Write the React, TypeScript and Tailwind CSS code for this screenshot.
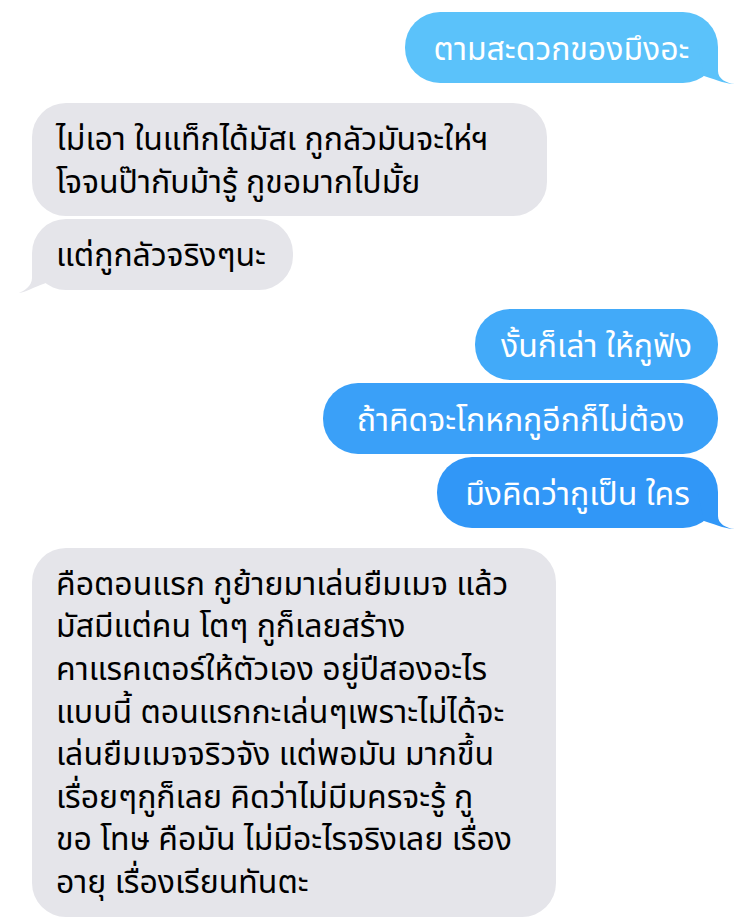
import React from "react";

const FONT = { fontFamily: '"Noto Sans", "Noto Sans Thai", "Noto Sans CJK SC", sans-serif' };

function TailRight({ color }: { color: string }) {
  return (
    <svg
      className="absolute right-[-20px] bottom-[-4px] w-[40px] h-[40px] overflow-visible"
      viewBox="-20 -36 40 40"
    >
      <path d="M0 -35 L0 -12 C0 -4 8 0 17 1 C9 1 1 -2 -14 -7 L-20 -35 Z" fill={color} />
    </svg>
  );
}

function TailLeft({ color }: { color: string }) {
  return (
    <svg
      className="absolute left-[-20px] bottom-[-4px] w-[40px] h-[40px] overflow-visible"
      viewBox="-20 -36 40 40"
    >
      <path
        d="M0 -35 L0 -12 C0 -4 -8 1 -13 3 C-6 2 0 -2 14 -7 L20 -35 Z"
        fill={color}
      />
    </svg>
  );
}

function Out({ text, color, tail, w }: { text: string; color: string; tail?: boolean; w: string }) {
  return (
    <div className="flex justify-end">
      <div
        className={`relative rounded-[35px] px-[20px] py-[14px] text-white text-[32px] leading-[43px] whitespace-nowrap text-center ${w}`}
        style={{ backgroundColor: color }}
      >
        {text}
        {tail && <TailRight color={color} />}
      </div>
    </div>
  );
}

function In({ lines, tail, w }: { lines: string[]; tail?: boolean; w: string }) {
  return (
    <div className="flex justify-start">
      <div
        className={`relative rounded-[34px] bg-[#e5e5ea] pl-[24px] pr-[16px] py-[14px] text-black text-[32px] leading-[42.6px] ${w}`}
      >
        {lines.map((l, i) => (
          <div key={i} className="whitespace-nowrap">
            {l}
          </div>
        ))}
        {tail && <TailLeft color="#e5e5ea" />}
      </div>
    </div>
  );
}

export default function App() {
  return (
    <div className="w-[750px] h-[922px] overflow-hidden bg-white" style={FONT}>
      <div className="flex flex-col px-[32px] pt-[12px]">
        <Out text="ตามสะดวกของมึงอะ" color="#5bc2fa" tail w="w-[313px]" />
        <div className="h-[20px]" />
        <In lines={["ไม่เอา ในแท็กได้มัสเ กูกลัวมันจะให่ฯ", "โจจนป๊ากับม้ารู้ กูขอมากไปมั้ย"]} w="w-[515px]" />
        <div className="h-[3px]" />
        <In lines={["แต่กูกลัวจริงๆนะ"]} tail w="w-[261px]" />
        <div className="h-[19px]" />
        <Out text="งั้นก็เล่า ให้กูฟัง" color="#42aaf9" w="w-[243px]" />
        <div className="h-[3px]" />
        <Out text="ถ้าคิดจะโกหกกูอีกก็ไม่ต้อง" color="#3aa0f8" w="w-[395px]" />
        <div className="h-[3px]" />
        <Out text="มึงคิดว่ากูเป็น ใคร" color="#3197f7" tail w="w-[281px]" />
        <div className="h-[20px]" />
        <In
          lines={[
            "คือตอนแรก กูย้ายมาเล่นยืมเมจ แล้ว",
            "มัสมีแต่คน โตๆ กูก็เลยสร้าง",
            "คาแรคเตอร์ให้ตัวเอง อยู่ปีสองอะไร",
            "แบบนี้ ตอนแรกกะเล่นๆเพราะไม่ได้จะ",
            "เล่นยืมเมจจริวจัง แต่พอมัน มากขึ้น",
            "เรื่อยๆกูก็เลย คิดว่าไม่มีมครจะรู้ กู",
            "ขอ โทษ คือมัน ไม่มีอะไรจริงเลย เรื่อง",
            "อายุ เรื่องเรียนทันตะ",
          ]}
          w="w-[524px]"
        />
      </div>
    </div>
  );
}
